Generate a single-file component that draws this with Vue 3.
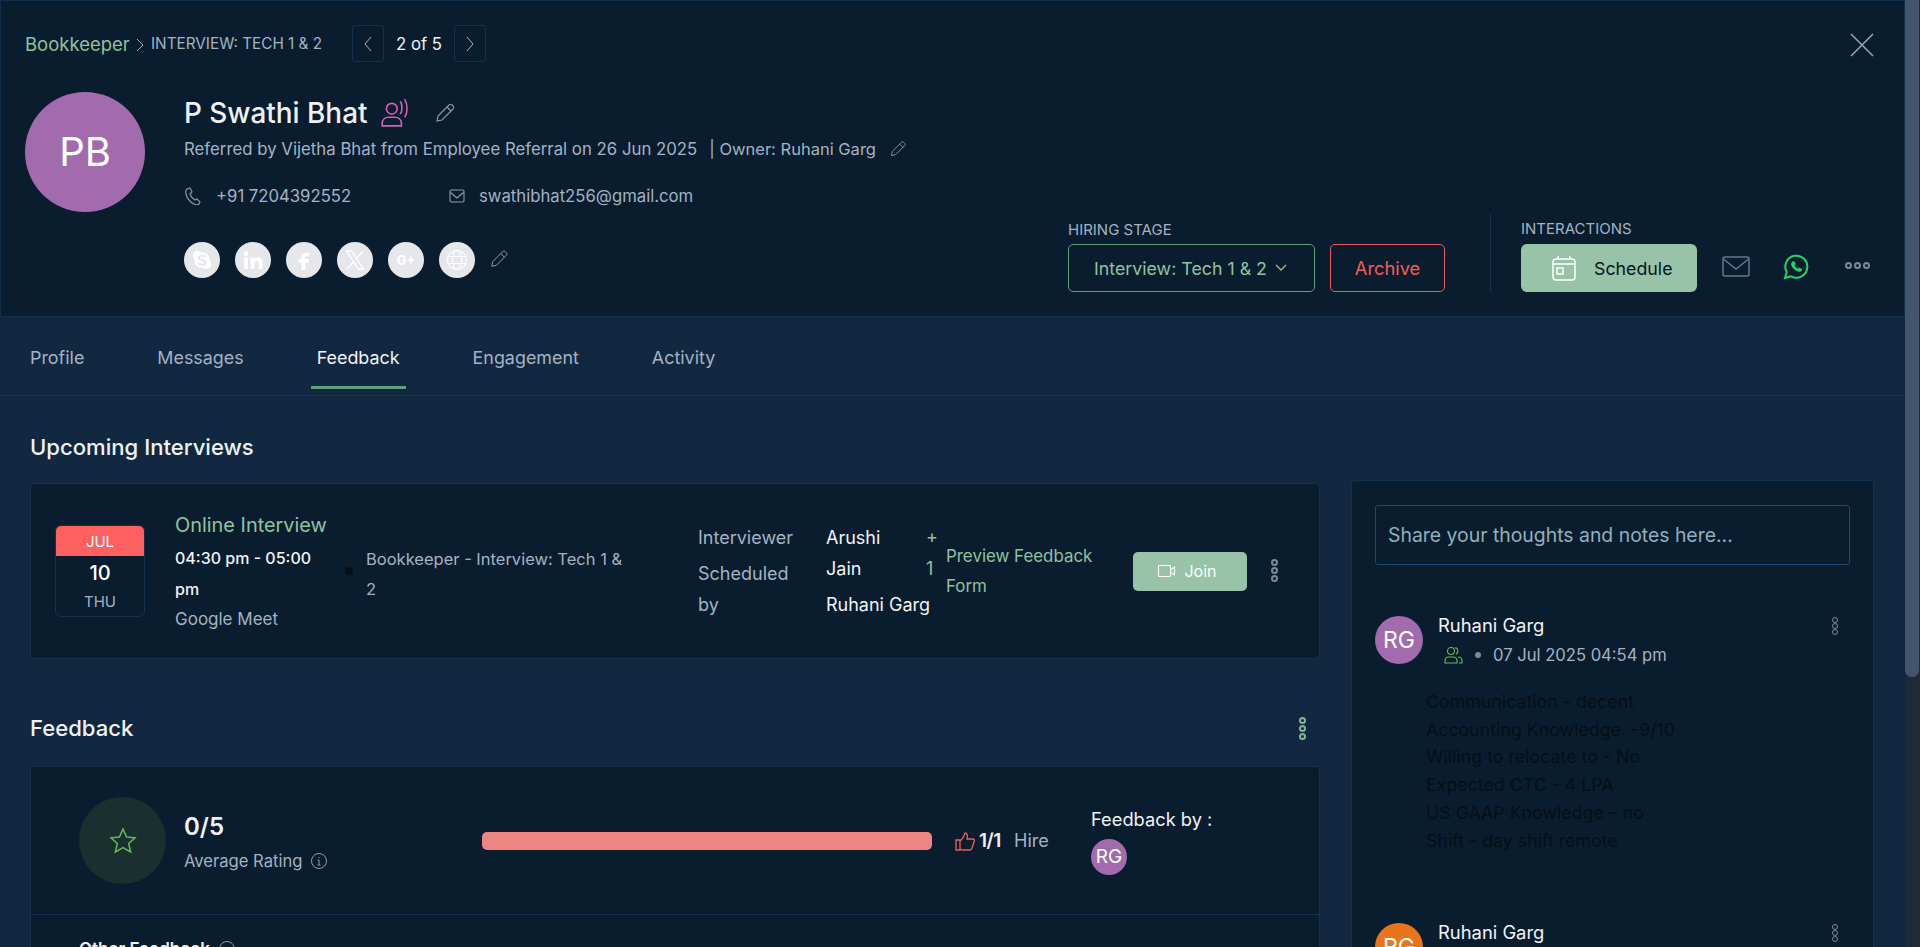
<script setup>
const tabs = ['Profile', 'Messages', 'Feedback', 'Engagement', 'Activity']
const socials = ['skype', 'in', 'fb', 'x', 'g', 'web']
const notes = [
  'Communication - decent',
  'Accounting Knowledge  -9/10',
  'Willing to relocate to - No',
  'Expected CTC - 4 LPA',
  'US GAAP Knowledge – no',
  'Shift - day shift remote',
]
</script>

<template>
  <div class="page">
    <header class="head">
      <div class="crumbs">
        <span class="crumb-job">Bookkeeper</span>
        <svg class="crumb-sep" width="10" height="18" viewBox="0 0 10 18"><path d="M2 3l6 6-6 6" /></svg>
        <span class="crumb-stage">INTERVIEW: TECH 1 &amp; 2</span>
        <button class="pager">
          <svg width="10" height="18" viewBox="0 0 10 18"><path d="M8 2L2 9l6 7" /></svg>
        </button>
        <span class="pager-text">2 of 5</span>
        <button class="pager">
          <svg width="10" height="18" viewBox="0 0 10 18"><path d="M2 2l6 7-6 7" /></svg>
        </button>
      </div>

      <div class="profile">
        <div class="avatar-big">PB</div>
        <div class="info">
          <div class="name-row">
            <span class="name">P Swathi Bhat</span>
            <svg class="talk" width="30" height="30" viewBox="0 0 28 28" fill="none" stroke="#d65fb8" stroke-width="1.5">
              <circle cx="11" cy="10" r="5" />
              <path d="M2 26v-2c0-4 3-6 6-6h6c3 0 6 2 6 6v2z" />
              <path d="M19 3c2 3 2 9 0 12M23 1c3 5 3 13 0 17" />
            </svg>
            <svg class="pencil name-pencil" width="22" height="22" viewBox="0 0 22 22"><path d="M3 19l1-5L15 3c1-1 2-1 3 0l1 1c1 1 1 2 0 3L8 18zM13 5l4 4" /></svg>
          </div>
          <div class="refer">
            <span>Referred by Vijetha Bhat from Employee Referral on 26 Jun 2025</span>
            <span class="owner">| Owner: Ruhani Garg</span>
            <svg class="pencil" width="18" height="18" viewBox="0 0 22 22"><path d="M3 19l1-5L15 3c1-1 2-1 3 0l1 1c1 1 1 2 0 3L8 18zM13 5l4 4" /></svg>
          </div>
          <div class="contact">
            <span class="contact-item phone">
              <svg width="18" height="18" viewBox="0 0 18 18" fill="none" stroke="#8c9cad" stroke-width="1.1"><path d="M3 2l3-1 2 4-2 2c1 3 3 5 5 6l2-1 3 3-1 2c-1 1-3 1-5 0C6 15 3 11 2 7c-.5-2 0-4 1-5z" /></svg>
              +91 7204392552
            </span>
            <span class="contact-item">
              <svg width="16" height="14" viewBox="0 0 16 14" fill="none" stroke="#8c9cad" stroke-width="1.1"><rect x="1" y="1" width="14" height="12" rx="1.500" /><path d="M1.500 3.500L8 9l6.500-5.500" /></svg>
              swathibhat256@gmail.com
            </span>
          </div>
          <div class="socials">
            <span v-for="s in socials" :key="s" class="social">
              <svg v-if="s === 'skype'" width="22" height="22" viewBox="0 0 24 24"><circle cx="7" cy="7" r="5" fill="#fff" /><circle cx="17" cy="17" r="5" fill="#fff" /><circle cx="12" cy="12" r="8.500" fill="#fff" /><path d="M16 8.500c-1-1.500-7-2-7.500 1 0 3 7.500 2 7.500 5.500-.5 3-6.500 2.500-8 .5" fill="none" stroke="#e5e7eb" stroke-width="2.200" /></svg>
              <svg v-else-if="s === 'in'" width="24" height="24" viewBox="0 0 24 24" fill="#fff"><path d="M5 3a2.500 2.500 0 1 1 0 5 2.500 2.500 0 0 1 0-5zM3 9.500h4V21H3zM9.500 9.500h3.800v1.600c.6-1 1.900-1.900 3.700-1.900 3.800 0 4.500 2.500 4.500 5.800V21h-4v-5.200c0-1.300 0-2.900-1.800-2.900s-2.100 1.400-2.100 2.800V21h-4.100z" /></svg>
              <svg v-else-if="s === 'fb'" width="22" height="22" viewBox="0 0 24 24" fill="#fff"><path d="M14 8h3.500V4H14c-2.800 0-5 2.200-5 5v2H6v4h3v8h4.500v-8H17l.7-4h-4.200V9c0-.6.3-1 .5-1z" /></svg>
              <svg v-else-if="s === 'x'" width="24" height="24" viewBox="0 0 24 24" fill="none" stroke="#fff" stroke-width="1.300"><path d="M3.500 3h5L20.500 21h-5zM20 3l-7 8M11 13.500L4 21" /></svg>
              <span v-else-if="s === 'g'" class="gplus">G+</span>
              <svg v-else width="24" height="24" viewBox="0 0 24 24" fill="none" stroke="#fff" stroke-width="1.100"><circle cx="12" cy="12" r="9.500" /><ellipse cx="12" cy="12" rx="4.500" ry="9.500" /><path d="M3 8.500h18M3 15.500h18" /></svg>
            </span>
            <svg class="pencil" width="20" height="20" viewBox="0 0 22 22"><path d="M3 19l1-5L15 3c1-1 2-1 3 0l1 1c1 1 1 2 0 3L8 18zM13 5l4 4" /></svg>
          </div>
        </div>

        <div class="actions">
          <div class="stage">
            <div class="small-label">HIRING STAGE</div>
            <div class="stage-row">
              <button class="stage-select">
                Interview: Tech 1 &amp; 2
                <svg width="12" height="8" viewBox="0 0 12 8" fill="none" stroke="#8fc3a0" stroke-width="1.300"><path d="M1 1l5 5 5-5" /></svg>
              </button>
              <button class="archive">Archive</button>
            </div>
          </div>
          <div class="divider"></div>
          <div class="interactions">
            <div class="small-label">INTERACTIONS</div>
            <div class="inter-row">
              <button class="schedule">
                <svg width="24" height="26" viewBox="0 0 24 26" fill="none" stroke="#fff" stroke-width="1.500"><rect x="1" y="4" width="22" height="21" rx="3" /><path d="M1 9h22M6 1v3M18 1v3" /><rect x="5" y="13" width="6" height="6" /></svg>
                Schedule
              </button>
              <svg class="mail" width="28" height="21" viewBox="0 0 28 21" fill="none" stroke="#65778c" stroke-width="1.500"><rect x="1" y="1" width="26" height="19" rx="2" /><path d="M1.500 3L14 13 26.500 3" /></svg>
              <svg class="whats" width="26" height="26" viewBox="0 0 26 26" fill="none"><path d="M2 24l1.700-6A11 11 0 1 1 8 22.300z" stroke="#25d366" stroke-width="2" /><path d="M9.500 7.500l1.500-.5 1.700 3-1.200 1.500c.8 1.500 1.800 2.500 3.300 3.200l1.400-1.200 3 1.700-.5 1.500c-1 1.300-3 1.300-5.500 0-2.500-1.300-4.300-3.500-5-5.700-.3-1.400.2-2.700 1.300-3.500z" fill="#25d366" /></svg>
              <span class="more">
                <i></i><i></i><i></i>
              </span>
            </div>
          </div>
        </div>
      </div>

      <svg class="close" width="26" height="24" viewBox="0 0 26 24" fill="none" stroke="#9aa8b5" stroke-width="1.500"><path d="M2 1l22 22M24 1L2 23" /></svg>
    </header>

    <nav class="tabs">
      <span v-for="t in tabs" :key="t" class="tab" :class="{ active: t === 'Feedback' }">{{ t }}</span>
    </nav>

    <main class="main">
      <section class="left">
        <h2 class="title">Upcoming Interviews</h2>
        <div class="card interview">
          <div class="date">
            <div class="date-month">JUL</div>
            <div class="date-day">10</div>
            <div class="date-week">THU</div>
          </div>
          <div class="iv-info">
            <div class="iv-title">Online Interview</div>
            <div class="iv-time">04:30 pm - 05:00 pm</div>
            <div class="iv-where">Google Meet</div>
          </div>
          <span class="iv-dot"></span>
          <div class="iv-role">Bookkeeper - Interview: Tech 1 &amp; 2</div>
          <div class="iv-labels">
            <div>Interviewer</div>
            <div class="iv-sched">Scheduled by</div>
          </div>
          <div class="iv-people">
            <div class="iv-first">
              <span class="iv-arushi">Arushi Jain</span>
              <span class="iv-plus">+ 1</span>
            </div>
            <div class="iv-owner">Ruhani Garg</div>
          </div>
          <a class="iv-preview">Preview Feedback Form</a>
          <button class="join">
            <svg width="18" height="12" viewBox="0 0 18 12" fill="none" stroke="#fff" stroke-width="1.100"><rect x=".5" y=".5" width="12" height="11" rx="1" /><path d="M12.500 5l4-3v8l-4-3" /></svg>
            Join
          </button>
          <span class="dots"><i></i><i></i><i></i></span>
        </div>

        <div class="fb-head">
          <h2 class="title">Feedback</h2>
          <span class="dots green"><i></i><i></i><i></i></span>
        </div>
        <div class="card feedback">
          <div class="summary">
            <div class="star-wrap">
              <svg width="28" height="28" viewBox="0 0 28 28" fill="none" stroke="#6fb55c" stroke-width="1.500"><path d="M14 2l3.600 8 8.400.8-6.300 5.700 1.900 8.500L14 20.500 6.400 25l1.900-8.500L2 10.800l8.400-.8z" /></svg>
            </div>
            <div class="rating">
              <div class="rating-num">0/5</div>
              <div class="rating-label">
                Average Rating
                <svg width="18" height="18" viewBox="0 0 18 18" fill="none" stroke="#8d9cae" stroke-width="1"><circle cx="9" cy="9" r="7.500" /><path d="M9 8v5M7.500 13h3M7.500 8H9M9 5v1" /></svg>
              </div>
            </div>
            <div class="bar"></div>
            <svg class="thumb" width="20" height="20" viewBox="0 0 20 20" fill="none" stroke="#ee5f5f" stroke-width="1.300"><path d="M1 9h4v10H1zM5 10c3-2 4-5 5-8 2 0 3 2 2 6h6c1 0 2 1 1 3l-2 6c-.5 1.500-1 2-2 2H8c-1 0-2-.5-3-1" /></svg>
            <span class="vote">1/1</span>
            <span class="hire">Hire</span>
            <div class="by">
              <div class="by-label">Feedback by :</div>
              <div class="avatar-small">RG</div>
            </div>
          </div>
          <div class="other">
            <span>Other Feedback</span>
            <svg width="18" height="18" viewBox="0 0 18 18" fill="none" stroke="#8d9cae" stroke-width="1"><circle cx="9" cy="9" r="7.500" /></svg>
          </div>
        </div>
      </section>

      <aside class="card notes">
        <div class="note-input">Share your thoughts and notes here...</div>
        <div class="comment">
          <div class="comment-head">
            <div class="comment-avatar">RG</div>
            <div class="comment-meta">
              <div class="comment-name">Ruhani Garg</div>
              <div class="comment-sub">
                <svg width="19" height="18" viewBox="0 0 19 18" fill="none" stroke="#6fb55c" stroke-width="1.100"><circle cx="7" cy="5" r="3.500" /><path d="M1 17v-2c0-3 2-4 4-4h4c2 0 4 1 4 4v2zM11 2c3-1 4 5 1 6M14 11c2 0 4 1 4 4v2h-3" /></svg>
                <span class="sub-dot"></span>
                <span>07 Jul 2025 04:54 pm</span>
              </div>
            </div>
            <span class="dots small"><i></i><i></i><i></i></span>
          </div>
          <div class="comment-body">
            <div v-for="n in notes" :key="n" class="note-line">{{ n }}</div>
          </div>
        </div>
        <div class="comment second">
          <div class="comment-head">
            <div class="comment-avatar orange">RG</div>
            <div class="comment-meta">
              <div class="comment-name">Ruhani Garg</div>
            </div>
            <span class="dots small"><i></i><i></i><i></i></span>
          </div>
        </div>
      </aside>
    </main>

    <div class="scroll-track"><div class="scroll-thumb"></div></div>
  </div>
</template>

<style scoped>
.page {
  position: relative;
  width: 100%;
  height: 947px;
  overflow: hidden;
  box-sizing: border-box;
  padding-right: 15px;
  background: #122840;
  color: #fff;
  font-family: Inter, "Liberation Sans", sans-serif;
}
button {
  font-family: inherit;
  cursor: pointer;
}
.head {
  position: relative;
  box-sizing: border-box;
  height: 317px;
  padding: 24px 34px 0 24px;
  background: #0a1d2e;
  border: 1px solid #12304c;
  border-radius: 2px;
}
.crumbs {
  display: flex;
  align-items: center;
  height: 37px;
}
.crumb-job {
  width: 105px;
  font-size: 18.500px;
  white-space: nowrap;
  color: #8fc3a0;
}
.crumb-sep {
  margin: 2px 6px 0 5px;
  fill: none;
  stroke: #9fb0c0;
  stroke-width: 1;
}
.crumb-stage {
  width: 201px;
  font-size: 15.300px;
  white-space: nowrap;
  color: #a3b3c4;
}
.pager {
  display: flex;
  align-items: center;
  justify-content: center;
  width: 32px;
  height: 37px;
  padding: 0;
  background: transparent;
  border: 1px solid #14324e;
  border-radius: 3px;
}
.pager svg {
  fill: none;
  stroke: #a3b3c4;
  stroke-width: 1;
}
.pager-text {
  width: 70px;
  text-align: center;
  font-size: 16.800px;
  color: #f0f3f6;
}
.profile {
  display: flex;
  height: 200px;
  margin-top: 30px;
}
.avatar-big {
  flex: none;
  width: 120px;
  height: 120px;
  border-radius: 50%;
  background: #a26bae;
  font-size: 40px;
  line-height: 120px;
  text-align: center;
}
.info {
  margin-left: 39px;
  padding-top: 1px;
}
.name-row {
  display: flex;
  align-items: center;
  height: 40px;
}
.name {
  font-size: 27.900px;
  font-weight: 500;
  color: #eef2f5;
}
.talk {
  margin-left: 13px;
}
.pencil {
  fill: none;
  stroke: #8c9cad;
  stroke-width: 1.100;
}
.name-pencil {
  margin-left: 24px;
}
.refer {
  display: flex;
  align-items: center;
  height: 24px;
  margin-top: 4px;
  font-size: 16.800px;
  color: #a3b3c4;
  white-space: pre;
}
.owner {
  margin-left: 12px;
  margin-right: 13px;
  font-size: 16.500px;
}
.contact {
  display: flex;
  height: 24px;
  margin-top: 23px;
  font-size: 16.700px;
  color: #a3b3c4;
}
.contact-item {
  display: flex;
  align-items: center;
  gap: 14px;
}
.phone {
  width: 265px;
}
.socials {
  display: flex;
  align-items: center;
  gap: 15px;
  margin-top: 34px;
}
.social {
  display: flex;
  align-items: center;
  justify-content: center;
  width: 36px;
  height: 36px;
  border-radius: 50%;
  background: #e5e7eb;
}
.gplus {
  font-size: 13px;
  font-weight: 800;
  color: #fff;
}
.socials .pencil {
  margin-left: -1px;
  margin-top: -2px;
}
.actions {
  display: flex;
  align-items: flex-end;
  margin-left: auto;
}
.small-label {
  font-size: 15px;
  line-height: 18px;
  white-space: nowrap;
  color: #a3b3c4;
}
.stage-row {
  display: flex;
  gap: 15px;
  margin-top: 5px;
}
.stage-select {
  display: flex;
  align-items: center;
  justify-content: center;
  gap: 8px;
  width: 247px;
  height: 48px;
  padding: 0 2px 0 0;
  background: transparent;
  border: 1px solid #5fa079;
  border-radius: 5px;
  font-size: 17.800px;
  color: #8fc3a0;
}
.archive {
  width: 115px;
  height: 48px;
  background: transparent;
  border: 1px solid #ef5b5b;
  border-radius: 5px;
  font-size: 18.300px;
  color: #f25c5c;
}
.divider {
  width: 1px;
  height: 78px;
  margin: 0 30px 0 45px;
  background: #17324c;
}
.inter-row {
  display: flex;
  align-items: center;
  margin-top: 6px;
}
.schedule {
  display: flex;
  align-items: center;
  gap: 18px;
  width: 176px;
  height: 48px;
  padding: 0 0 0 31px;
  background: #98c3a8;
  border: none;
  border-radius: 6px;
  font-size: 17.800px;
  color: #0a1520;
}
.mail {
  margin-left: 25px;
  margin-bottom: 3px;
}
.whats {
  margin-left: 33px;
  margin-bottom: 3px;
}
.more {
  display: flex;
  gap: 2px;
  margin-left: 36px;
  margin-bottom: 5px;
}
.more i {
  width: 7px;
  height: 7px;
  box-sizing: border-box;
  border: 2px solid #7a8a9d;
  border-radius: 50%;
}
.close {
  position: absolute;
  top: 32px;
  right: 29px;
}
.tabs {
  display: flex;
  gap: 61px;
  height: 79px;
  box-sizing: border-box;
  padding-left: 24px;
  border-bottom: 1px solid #17324c;
}
.tab {
  box-sizing: border-box;
  height: 72px;
  padding: 29px 6px 0;
  font-size: 17.900px;
  line-height: 24px;
  color: #a3b3c4;
}
.tab.active {
  color: #f0f3f6;
  border-bottom: 3px solid #5fa079;
}
.main {
  display: flex;
  gap: 31px;
  padding: 36px 0 0 30px;
}
.left {
  flex: none;
  width: 1290px;
}
.title {
  margin: 0;
  font-size: 22.100px;
  line-height: 30px;
  font-weight: 500;
  color: #eef2f5;
}
.card {
  box-sizing: border-box;
  background: #0a1d2e;
  border: 1px solid #14324e;
  border-radius: 4px;
}
.interview {
  display: flex;
  align-items: center;
  height: 176px;
  margin-top: 21px;
  padding: 0 24px;
}
.date {
  flex: none;
  width: 90px;
  height: 92px;
  box-sizing: border-box;
  border: 1px solid #14324e;
  border-radius: 6px;
  overflow: hidden;
  text-align: center;
}
.date-month {
  height: 30px;
  background: #fe6060;
  font-size: 15px;
  line-height: 31px;
}
.date-day {
  font-size: 20px;
  line-height: 30px;
  margin-top: 2px;
  font-weight: 500;
}
.date-week {
  font-size: 15px;
  line-height: 28px;
  color: #a3b3c4;
}
.iv-info {
  flex: none;
  width: 170px;
  margin-left: 30px;
}
.iv-title {
  font-size: 19.900px;
  line-height: 30px;
  color: #8fc3a0;
  white-space: nowrap;
}
.iv-time {
  width: 150px;
  margin-top: 3px;
  font-size: 16px;
  font-weight: 500;
  line-height: 31px;
  color: #f0f3f6;
}
.iv-where {
  font-size: 17px;
  line-height: 28px;
  color: #a3b3c4;
}
.iv-dot {
  flex: none;
  width: 8px;
  height: 8px;
  border-radius: 50%;
  background: #050f18;
}
.iv-role {
  flex: none;
  width: 265px;
  margin-left: 13px;
  margin-top: 6px;
  font-size: 16.500px;
  line-height: 30px;
  color: #a3b3c4;
}
.iv-labels {
  flex: none;
  width: 100px;
  margin-left: 67px;
  font-size: 18px;
  line-height: 31px;
  color: #a3b3c4;
}
.iv-sched {
  margin-top: 5px;
}
.iv-people {
  flex: none;
  width: 120px;
  margin-left: 28px;
  font-size: 18px;
  line-height: 31px;
  color: #f0f3f6;
}
.iv-first {
  display: flex;
  justify-content: space-between;
}
.iv-arushi {
  width: 70px;
}
.iv-plus {
  width: 20px;
  color: #8fc3a0;
}
.iv-owner {
  margin-top: 5px;
  white-space: nowrap;
}
.iv-preview {
  flex: none;
  width: 160px;
  font-size: 16.900px;
  line-height: 30px;
  color: #8fc3a0;
}
.join {
  display: flex;
  align-items: center;
  justify-content: center;
  gap: 8px;
  flex: none;
  width: 114px;
  height: 39px;
  margin: 0 0 0 27px;
  padding: 0 5px 0 0;
  background: #98c3a8;
  border: none;
  border-radius: 5px;
  font-size: 16px;
  color: #fff;
}
.dots {
  display: flex;
  flex-direction: column;
  gap: 1px;
}
.dots i {
  width: 7px;
  height: 7px;
  box-sizing: border-box;
  border: 2px solid #7a8a9d;
  border-radius: 50%;
}
.interview .dots {
  margin-left: 24px;
  margin-top: -2px;
}
.dots.green i {
  border-color: #7fb69a;
}
.fb-head {
  display: flex;
  align-items: center;
  justify-content: space-between;
  margin-top: 54px;
  padding-right: 14px;
}
.feedback {
  margin-top: 23px;
  height: 400px;
}
.summary {
  display: flex;
  align-items: center;
  height: 147px;
  padding-left: 48px;
  border-bottom: 1px solid #14324e;
}
.star-wrap {
  display: flex;
  align-items: center;
  justify-content: center;
  flex: none;
  width: 87px;
  height: 87px;
  border-radius: 50%;
  background: #19302f;
}
.rating {
  flex: none;
  width: 298px;
  margin-left: 18px;
}
.rating-num {
  font-size: 24px;
  font-weight: 600;
  line-height: 34px;
  margin-top: -1px;
  color: #eef2f5;
}
.rating-label {
  display: flex;
  align-items: center;
  gap: 8px;
  margin-top: 7px;
  font-size: 16.600px;
  color: #a3b3c4;
}
.bar {
  flex: none;
  width: 450px;
  height: 18px;
  border-radius: 5px;
  background: #ee8585;
}
.thumb {
  flex: none;
  margin-left: 23px;
}
.vote {
  width: 24px;
  margin-left: 4px;
  font-size: 19px;
  font-weight: 600;
  letter-spacing: -.5px;
  white-space: nowrap;
  color: #f0f3f6;
}
.hire {
  width: 76px;
  margin-left: 11px;
  font-size: 18px;
  color: #a3b3c4;
}
.by {
  padding-left: 1px;
  padding-top: 2px;
}
.by-label {
  font-size: 18.300px;
  line-height: 22px;
  white-space: nowrap;
  color: #f0f3f6;
}
.avatar-small {
  width: 36px;
  height: 36px;
  margin-top: 9px;
  border-radius: 50%;
  background: #a26bae;
  font-size: 19px;
  line-height: 36px;
  text-align: center;
}
.other {
  display: flex;
  align-items: center;
  gap: 8px;
  padding: 24px 0 0 48px;
  font-size: 17px;
  font-weight: 600;
  color: #eef2f5;
}
.notes {
  flex: none;
  width: 523px;
  height: 520px;
  margin-top: 48px;
  padding: 24px 23px;
}
.note-input {
  box-sizing: border-box;
  height: 60px;
  padding: 0 12px;
  border: 1px solid #1d4a70;
  border-radius: 3px;
  font-size: 19.400px;
  line-height: 58px;
  color: #8fb0bd;
}
.comment {
  margin-top: 49px;
}
.comment.second {
  margin-top: 67px;
}
.comment-head {
  display: flex;
}
.comment-avatar {
  flex: none;
  width: 48px;
  height: 48px;
  margin-top: 2px;
  border-radius: 50%;
  background: #a26bae;
  font-size: 23px;
  line-height: 48px;
  text-align: center;
}
.comment-avatar.orange {
  background: #e8751a;
}
.comment-meta {
  flex: 1;
  margin-left: 15px;
}
.comment-name {
  margin-top: -1px;
  font-size: 18.400px;
  line-height: 24px;
  color: #f0f3f6;
}
.comment-sub {
  display: flex;
  align-items: center;
  height: 24px;
  margin-top: 6px;
  padding-left: 6px;
  font-size: 16.600px;
  color: #a3b3c4;
}
.sub-dot {
  width: 6px;
  height: 6px;
  margin: 0 12px;
  border-radius: 50%;
  background: #7a8a9d;
}
.dots.small {
  gap: 0;
  margin: 3px 12px 0 0;
}
.dots.small i {
  width: 6px;
  height: 6px;
  border-width: 1.500px;
}
.comment-body {
  margin-top: 21px;
  padding-left: 51px;
  font-size: 17.800px;
  line-height: 27.700px;
  color: #050f18;
  white-space: pre;
}
.scroll-track {
  position: absolute;
  top: 0;
  right: 0;
  bottom: 0;
  width: 15px;
  background: #1e2a38;
}
.scroll-thumb {
  width: 14px;
  height: 677px;
  box-sizing: border-box;
  background: #44546b;
  border-radius: 0 0 7px 7px;
}
</style>
